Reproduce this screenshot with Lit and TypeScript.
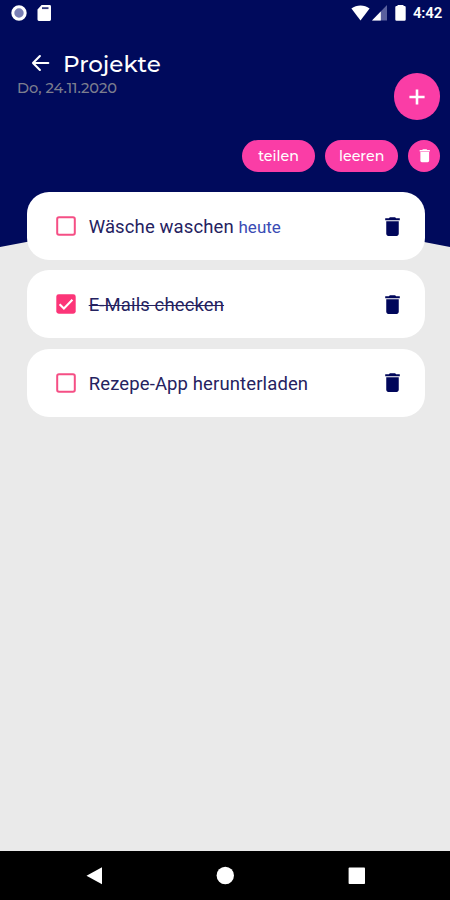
import { LitElement, html, css, svg, nothing } from "lit";
import { customElement, property, state } from "lit/decorators.js";
import { classMap } from "lit/directives/class-map.js";

interface Task {
  title: string;
  due?: string;
  done: boolean;
}

const trashPath = svg`<path fill="currentColor" d="M6 19c0 1.1.9 2 2 2h8c1.1 0 2-.9 2-2V7H6v12zM19 4h-3.5l-1-1h-5l-1 1H5v2h14V4z"/>`;

@customElement("status-bar")
class StatusBar extends LitElement {
  static styles = css`
    :host {
      display: flex;
      justify-content: space-between;
      height: 26px;
      padding: 0 8px 0 11px;
      color: #fff;
      font: 600 15px/26px Roboto, sans-serif;
    }
    .side { display: flex; align-items: center; }
    svg { display: block; }
    .card { margin-left: 10px; }
    .cell { margin-left: 2px; }
    .battery { margin-left: 8px; }
    .time { margin-left: 7.5px; letter-spacing: -0.2px; }
  `;
  render() {
    return html`
      <div class="side">
        <svg width="16" height="16" viewBox="0 0 16 16"><circle cx="8" cy="8" r="6.2" fill="#7a7fb4" stroke="#fff" stroke-width="3"/></svg>
        <svg class="card" width="15" height="16" viewBox="0 0 15 16"><path fill="#fff" d="M4.6 0H12.6a1.4 1.4 0 0 1 1.4 1.4v13.2A1.4 1.4 0 0 1 12.6 16H1.9a1.4 1.4 0 0 1-1.4-1.4V4.5z"/><path fill="#000a5c" d="M5 2.2h6.500v1.900H5z" opacity=".8"/></svg>
      </div>
      <div class="side">
        <svg width="19" height="16" viewBox="0 0 19 16"><path fill="#fff" d="M.4 3.6C5.500-.4 13.500-.4 18.600 3.600L9.500 15.400z"/></svg>
        <svg class="cell" width="15" height="16" viewBox="0 0 15 16"><path fill="#5a609e" d="M15 0v15.500H0z"/><path fill="#fff" d="M8.800 6.400v9.100H0z"/></svg>
        <svg class="battery" width="11" height="16" viewBox="0 0 11 16"><path fill="#fff" d="M2.500 0h6v1h1q1.200 0 1.200 1.200v12.400q0 1.200-1.200 1.200h-8q-1.200 0-1.200-1.200V2.200q0-1.200 1.200-1.200h1z"/></svg>
        <span class="time">4:42</span>
      </div>`;
  }
}

@customElement("task-card")
class TaskCard extends LitElement {
  @property({ attribute: false }) task!: Task;
  static styles = css`
    :host {
      display: flex;
      align-items: center;
      box-sizing: border-box;
      height: 68.2px;
      padding: 0 20px 0 29.5px;
      border-radius: 22px;
      background: #fff;
      color: #25225f;
      font: 400 18.5px/24px Roboto, sans-serif;
      letter-spacing: 0.12px;
    }
    .box { flex: none; width: 20px; height: 20px; display: block; margin-right: 12.5px; }
    .label { flex: 1; white-space: pre; padding-top: 2px; }
    .done { text-decoration: line-through; text-decoration-thickness: 1px; }
    .due { color: #3a4cb4; font-size: 17px; letter-spacing: 0; }
    .trash { color: #00065a; width: 25px; height: 25px; display: block; }
  `;
  private toggle() {
    this.task = { ...this.task, done: !this.task.done };
  }
  render() {
    const { title, due, done } = this.task;
    return html`
      <svg class="box" viewBox="0 0 20 20" @click=${this.toggle}>
        ${done
          ? svg`<rect x=".3" y=".3" width="19.400" height="19.400" rx="2.400" fill="#fc3578"/><path d="M3.600 10.300l4.300 4.200 8.500-8.700" fill="none" stroke="#fff" stroke-width="2.100"/>`
          : svg`<rect x="1.200" y="1.200" width="17.600" height="17.600" rx="1.800" fill="none" stroke="#f54f85" stroke-width="2"/>`}
      </svg>
      <span class="label"><span class=${classMap({ done })}>${title}</span>${due ? html` <span class="due">${due}</span>` : nothing}</span>
      <svg class="trash" viewBox="0 0 24 24">${trashPath}</svg>`;
  }
}

@customElement("app-root")
class AppRoot extends LitElement {
  @state() private tasks: Task[] = [
    { title: "Wäsche waschen", due: "heute", done: false },
    { title: "E-Mails checken", done: true },
    { title: "Rezepe-App herunterladen", done: false },
  ];
  static styles = css`
    :host {
      display: flex;
      flex-direction: column;
      position: relative;
      width: 450px;
      height: 900px;
      overflow: hidden;
      background: #eaeaea;
      font-family: Montserrat, Inter, sans-serif;
    }
    .backdrop { position: absolute; inset: 0 0 auto 0; width: 450px; height: 250px; }
    .content { position: relative; flex: 1; display: flex; flex-direction: column; }
    .header { display: flex; justify-content: space-between; height: 113.7px; padding: 0 9.7px 0 17px; }
    .heading { padding-top: 23px; }
    .title-row { display: flex; align-items: center; height: 30px; padding-left: 14px; }
    .back { width: 19px; height: 18px; display: block; margin: 0 13px 3px 0; }
    .title { color: #fff; font-size: 23px; line-height: 30px; font-weight: 500; }
    .date { color: #7c7e8e; font-size: 14.6px; line-height: 18px; font-weight: 500; }
    .fab {
      width: 46.5px; height: 46.5px; margin-top: 47px; border-radius: 50%;
      background: #fa3da6; display: grid; place-items: center;
    }
    .fab svg { width: 26px; height: 26px; display: block; margin-top: 1px; }
    .actions { display: flex; justify-content: flex-end; gap: 10px; padding-right: 9.7px; height: 32px; }
    .pill {
      width: 73.2px; border-radius: 16px; background: #fa3da6; color: #fff;
      text-align: center; font-size: 14.2px; line-height: 33px; font-weight: 500;
    }
    .round { width: 32px; border-radius: 50%; background: #fa3da6; color: #fff; display: grid; place-items: center; }
    .round svg { width: 17.5px; height: 17.5px; display: block; }
    .list { display: flex; flex-direction: column; gap: 10.1px; padding: 20.3px 25.5px 0 26.7px; }
    .nav {
      position: relative; display: flex; justify-content: space-between; align-items: center;
      box-sizing: border-box; height: 49px; padding: 0 84px 0 86px; background: #000;
    }
    .nav svg { display: block; width: 18px; height: 18px; overflow: visible; }
  `;
  render() {
    return html`
      <svg class="backdrop" viewBox="0 0 450 250"><path fill="#000a5c" d="M0 0h450v247Q225 202 0 247z"/></svg>
      <div class="content">
        <status-bar></status-bar>
        <div class="header">
          <div class="heading">
            <div class="title-row">
              <svg class="back" viewBox="0 0 19 18" fill="none" stroke="#fff" stroke-width="2.100" stroke-linecap="round" stroke-linejoin="round"><path d="M17.300 9H2M8.900 2L2 9l6.900 7"/></svg>
              <span class="title">Projekte</span>
            </div>
            <div class="date">Do, 24.11.2020</div>
          </div>
          <div class="fab"><svg viewBox="0 0 24 24"><path d="M12 5v14M5 12h14" stroke="#fff" stroke-width="2.400"/></svg></div>
        </div>
        <div class="actions">
          <div class="pill">teilen</div>
          <div class="pill">leeren</div>
          <div class="round"><svg viewBox="0 0 24 24">${trashPath}</svg></div>
        </div>
        <div class="list">${this.tasks.map((task) => html`<task-card .task=${task}></task-card>`)}</div>
      </div>
      <div class="nav">
        <svg viewBox="0 0 18 18"><path fill="#fff" d="M16 .2v17L.5 8.700z"/></svg>
        <svg viewBox="0 0 18 18"><circle cx="8.300" cy="8.500" r="8.700" fill="#fff"/></svg>
        <svg viewBox="0 0 18 18"><rect x=".6" y=".6" width="16.400" height="16.400" rx=".8" fill="#fff"/></svg>
      </div>`;
  }
}
